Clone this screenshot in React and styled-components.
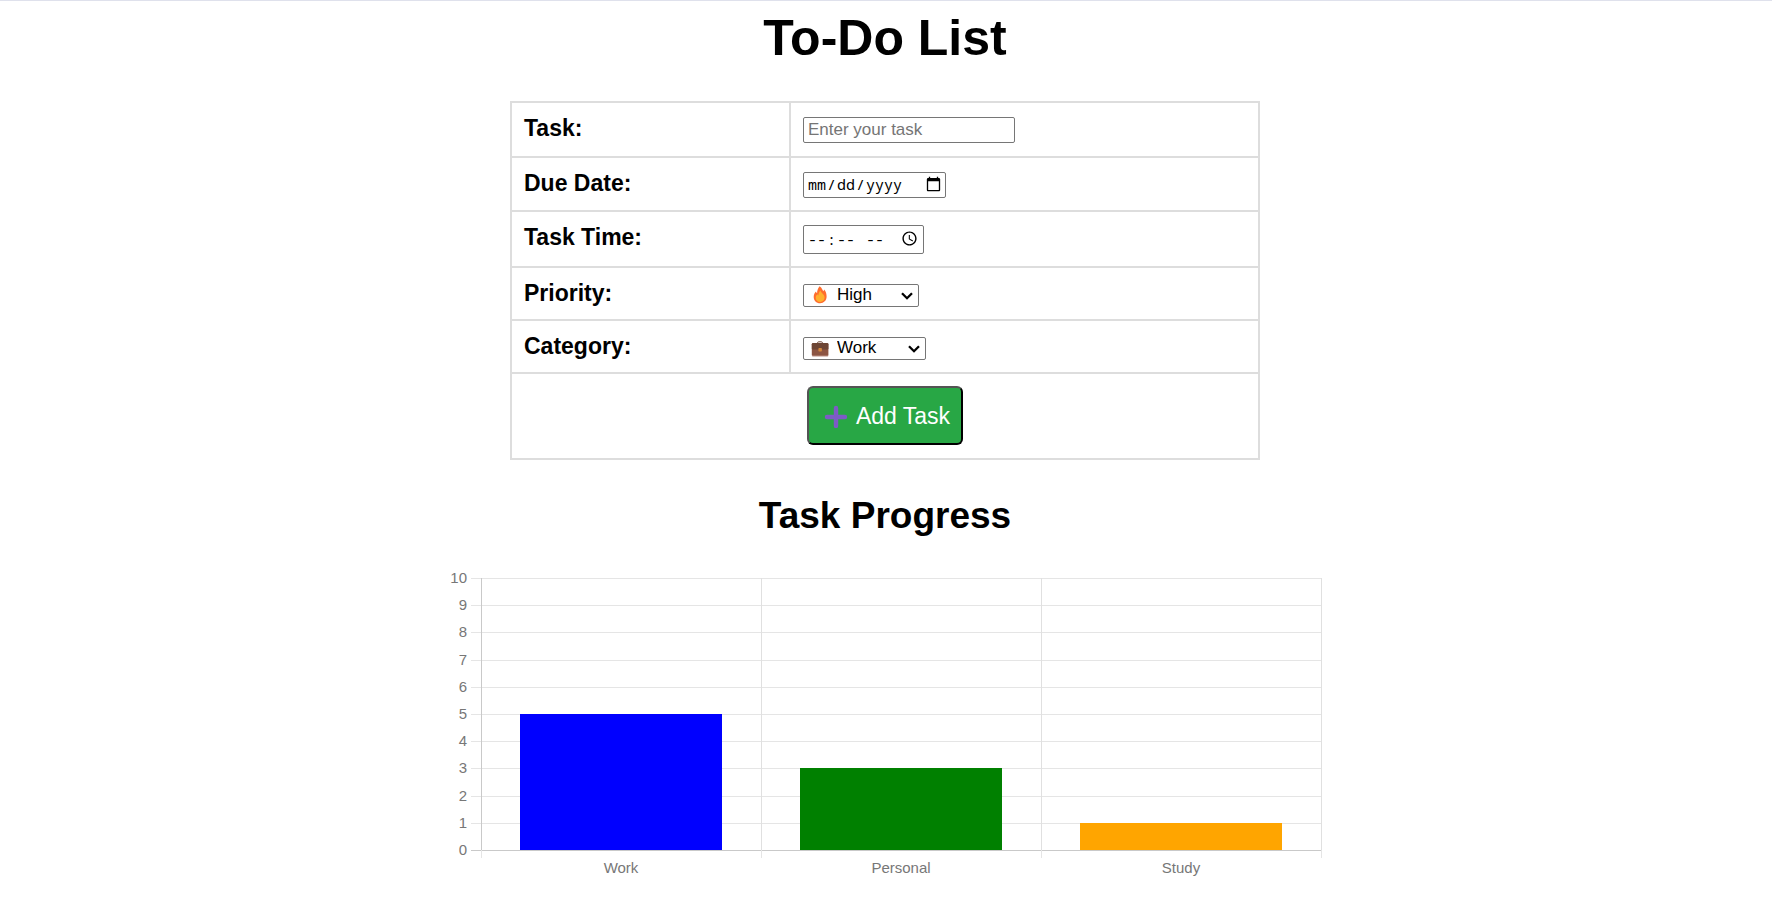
import React from "react";
import styled, { createGlobalStyle } from "styled-components";

const GlobalStyle = createGlobalStyle`
  *, *::before, *::after { box-sizing: border-box; }
  body {
    margin: 0;
    background: #fff;
    color: #000;
    font-family: "Liberation Sans", Arial, Helvetica, sans-serif;
  }
`;

const Page = styled.main`
  display: flex;
  flex-direction: column;
  align-items: center;
  padding: 8px 2px 24px 0;
  border-top: 1px solid #dfe1ec;
`;

const Title = styled.h1`
  margin: 0;
  font-size: 50px;
  line-height: 58px;
`;

const Subtitle = styled.h2`
  margin: 34px 0 0;
  font-size: 37px;
  line-height: 44px;
`;

const Form = styled.form`
  width: 100%;
  max-width: 750px;
  margin-top: 34px;
`;

const FormTable = styled.table`
  width: 100%;
  border-collapse: collapse;
  table-layout: fixed;
`;

const Row = styled.tr`
  height: ${(p) => p.$height}px;
`;

const LabelCell = styled.th`
  width: 279px;
  padding: 12px;
  border: 2px solid #ddd;
  text-align: left;
  vertical-align: top;
  font-size: 23px;
  line-height: 26px;
`;

const FieldCell = styled.td`
  padding: ${(p) => p.$top}px 12px 0;
  border: 2px solid #ddd;
  vertical-align: top;
`;

const ActionCell = styled.td`
  padding: 12px;
  border: 2px solid #ddd;
  text-align: center;
  vertical-align: top;
`;

const Input = styled.input`
  display: block;
  width: ${(p) => p.$width}px;
  height: ${(p) => p.$height}px;
  margin: 0;
  padding: 1px 4px;
  border: 1px solid #767676;
  border-radius: 2px;
  background: #fff;
  color: #000;
  font-family: inherit;
  font-size: 17px;

  &::placeholder { color: #757575; }
`;

const PickerInput = styled(Input)`
  padding: 0 ${(p) => p.$end}px 2px 3px;
  font-family: "Noto Sans Mono", "DejaVu Sans Mono", monospace;
  font-size: 15px;

  &::-webkit-calendar-picker-indicator {
    width: 17px;
    height: 17px;
    padding: 2px;
    box-sizing: content-box;
    margin-left: 0;
  }
`;

const SelectBox = styled.div`
  position: relative;
  width: ${(p) => p.$width}px;
`;

const Select = styled.select`
  appearance: none;
  display: block;
  width: 100%;
  height: 23px;
  margin: 0;
  padding: 0 28px 1px 33px;
  border: 1px solid #767676;
  border-radius: 2px;
  background: #fff;
  color: #000;
  font-family: inherit;
  font-size: 17px;
  line-height: 20px;
`;

const Emblem = styled.svg`
  position: absolute;
  top: 2px;
  left: 8px;
  width: 18px;
  height: 18px;
  pointer-events: none;
`;

const Chevron = styled.svg`
  position: absolute;
  top: 8px;
  right: 6px;
  width: 12px;
  height: 8px;
  pointer-events: none;
`;

const AddButton = styled.button`
  display: inline-flex;
  align-items: center;
  gap: 8px;
  height: 59px;
  padding: 0 11px 0 15px;
  border: 2px outset #000;
  border-radius: 6px;
  background: #28a745;
  color: #fff;
  font-family: inherit;
  font-size: 23px;
  line-height: 26px;
  vertical-align: top;
  cursor: pointer;
`;

const Chart = styled.svg`
  display: block;
  width: 100%;
  max-width: 874px;
  height: auto;
  margin-top: 20px;
  font-size: 15px;
  fill: #777;
`;

const Fire = () => (
  <Emblem viewBox="0 0 18 18" aria-hidden="true">
    <path d="M8.6 0.3C11.2 2 11.3 4 12.2 5.2C12.7 4.8 13 4.2 13.1 3.5C15 5.5 15.6 8 15.6 10.6C15.6 14.7 12.8 17.2 9.1 17.2C5.3 17.2 2.7 14.6 2.7 10.9C2.7 8.6 3.7 6.8 5 5.5C5.1 6.4 5.5 7 6.1 7.3C6.1 4.7 7 2.1 8.6 0.3Z" fill="#ff6d2d" />
    <path d="M9.5 4.6C9.8 7 13.6 8.2 13.6 11.6C13.6 14.4 11.6 16 9.1 16C6.6 16 4.7 14.2 4.7 11.8C4.7 10.3 5.4 9.1 6.4 8.3C6.6 9 7 9.4 7.5 9.6C7.4 7.7 8.1 5.8 9.5 4.6Z" fill="#ffb02e" />
  </Emblem>
);

const Briefcase = () => (
  <Emblem viewBox="0 0 18 18" aria-hidden="true">
    <path d="M6.6 4V3.8Q6.6 2.8 7.6 2.8H10.4Q11.4 2.8 11.4 3.8V4" fill="none" stroke="#6d4534" strokeWidth="1" />
    <rect x="0.8" y="4.2" width="16.6" height="12.8" rx="1.2" fill="#8c5543" />
    <path d="M2 4.1H16.2Q17.4 4.1 17.4 5.3V9.3Q17.4 10.5 16.2 10.5H2Q0.8 10.5 0.8 9.3V5.3Q0.8 4.1 2 4.1Z" fill="#6d4534" />
    <path d="M0.8 16.4H17.4Q17.4 17.4 16.4 17.4H1.8Q0.8 17.4 0.8 16.4Z" fill="#b98d82" />
    <rect x="7.4" y="8.9" width="3.5" height="3.6" rx="0.8" fill="#d3883e" />
  </Emblem>
);

const Arrow = () => (
  <Chevron viewBox="0 0 12 8" aria-hidden="true">
    <path d="M1 1.2L6 6.2L11 1.2" fill="none" stroke="#000" strokeWidth="2.3" />
  </Chevron>
);

const Plus = () => (
  <svg width="24" height="24" viewBox="0 0 24 24" aria-hidden="true">
    <path d="M12 4V22M3 13H21" stroke="#7d5bc6" strokeWidth="4.4" strokeLinecap="round" />
  </svg>
);

const bars = [
  { label: "Work", value: 5, color: "#0000ff" },
  { label: "Personal", value: 3, color: "#008000" },
  { label: "Study", value: 1, color: "#ffa500" },
];

const plot = { left: 33, top: 20, width: 840, height: 272, max: 10 };
const column = plot.width / bars.length;
const base = plot.top + plot.height;
const yOf = (value) => Math.round(base - (value * plot.height) / plot.max);

function ProgressChart() {
  return (
    <Chart viewBox="0 0 874 330" role="img" aria-label="Task progress by category">
      {Array.from({ length: plot.max + 1 }, (_, n) => (
        <g key={n}>
          <rect x={plot.left - 10} y={yOf(n)} width={plot.width + 10} height="1" fill={n ? "#e5e5e5" : "#c9c9c9"} />
          <text x={plot.left - 14} y={yOf(n) + 5} textAnchor="end">{n}</text>
        </g>
      ))}
      {[0, 1, 2, 3].map((n) => (
        <g key={n}>
          <rect x={plot.left + n * column} y={plot.top} width="1" height={plot.height} fill={n ? "#e0e0e0" : "#c9c9c9"} />
          <rect x={plot.left + n * column} y={base} width="1" height="8" fill="#e5e5e5" />
        </g>
      ))}
      {bars.map((bar, n) => (
        <g key={bar.label}>
          <rect x={plot.left + n * column + 39} y={yOf(bar.value)} width="202" height={base - yOf(bar.value)} fill={bar.color} />
          <text x={plot.left + (n + 0.5) * column} y={base + 23} textAnchor="middle">{bar.label}</text>
        </g>
      ))}
    </Chart>
  );
}

export default function App() {
  return (
    <>
      <GlobalStyle />
      <Page>
        <Title>To-Do List</Title>
        <Form onSubmit={(e) => e.preventDefault()}>
          <FormTable>
            <tbody>
              <Row $height={55}>
                <LabelCell scope="row"><label htmlFor="task">Task:</label></LabelCell>
                <FieldCell $top={14}>
                  <Input id="task" type="text" placeholder="Enter your task" $width={212} $height={26} />
                </FieldCell>
              </Row>
              <Row $height={54}>
                <LabelCell scope="row"><label htmlFor="due">Due Date:</label></LabelCell>
                <FieldCell $top={14}>
                  <PickerInput id="due" type="date" $end={1} $width={143} $height={26} />
                </FieldCell>
              </Row>
              <Row $height={56}>
                <LabelCell scope="row"><label htmlFor="time">Task Time:</label></LabelCell>
                <FieldCell $top={13}>
                  <PickerInput id="time" type="time" $end={3} $width={121} $height={29} />
                </FieldCell>
              </Row>
              <Row $height={53}>
                <LabelCell scope="row"><label htmlFor="priority">Priority:</label></LabelCell>
                <FieldCell $top={16}>
                  <SelectBox $width={116}>
                    <Select id="priority" defaultValue="High">
                      <option>High</option>
                      <option>Medium</option>
                      <option>Low</option>
                    </Select>
                    <Fire />
                    <Arrow />
                  </SelectBox>
                </FieldCell>
              </Row>
              <Row $height={53}>
                <LabelCell scope="row"><label htmlFor="category">Category:</label></LabelCell>
                <FieldCell $top={16}>
                  <SelectBox $width={123}>
                    <Select id="category" defaultValue="Work">
                      <option>Work</option>
                      <option>Personal</option>
                      <option>Study</option>
                    </Select>
                    <Briefcase />
                    <Arrow />
                  </SelectBox>
                </FieldCell>
              </Row>
              <Row $height={86}>
                <ActionCell colSpan={2}>
                  <AddButton type="submit"><Plus />Add Task</AddButton>
                </ActionCell>
              </Row>
            </tbody>
          </FormTable>
        </Form>
        <Subtitle>Task Progress</Subtitle>
        <ProgressChart />
      </Page>
    </>
  );
}
